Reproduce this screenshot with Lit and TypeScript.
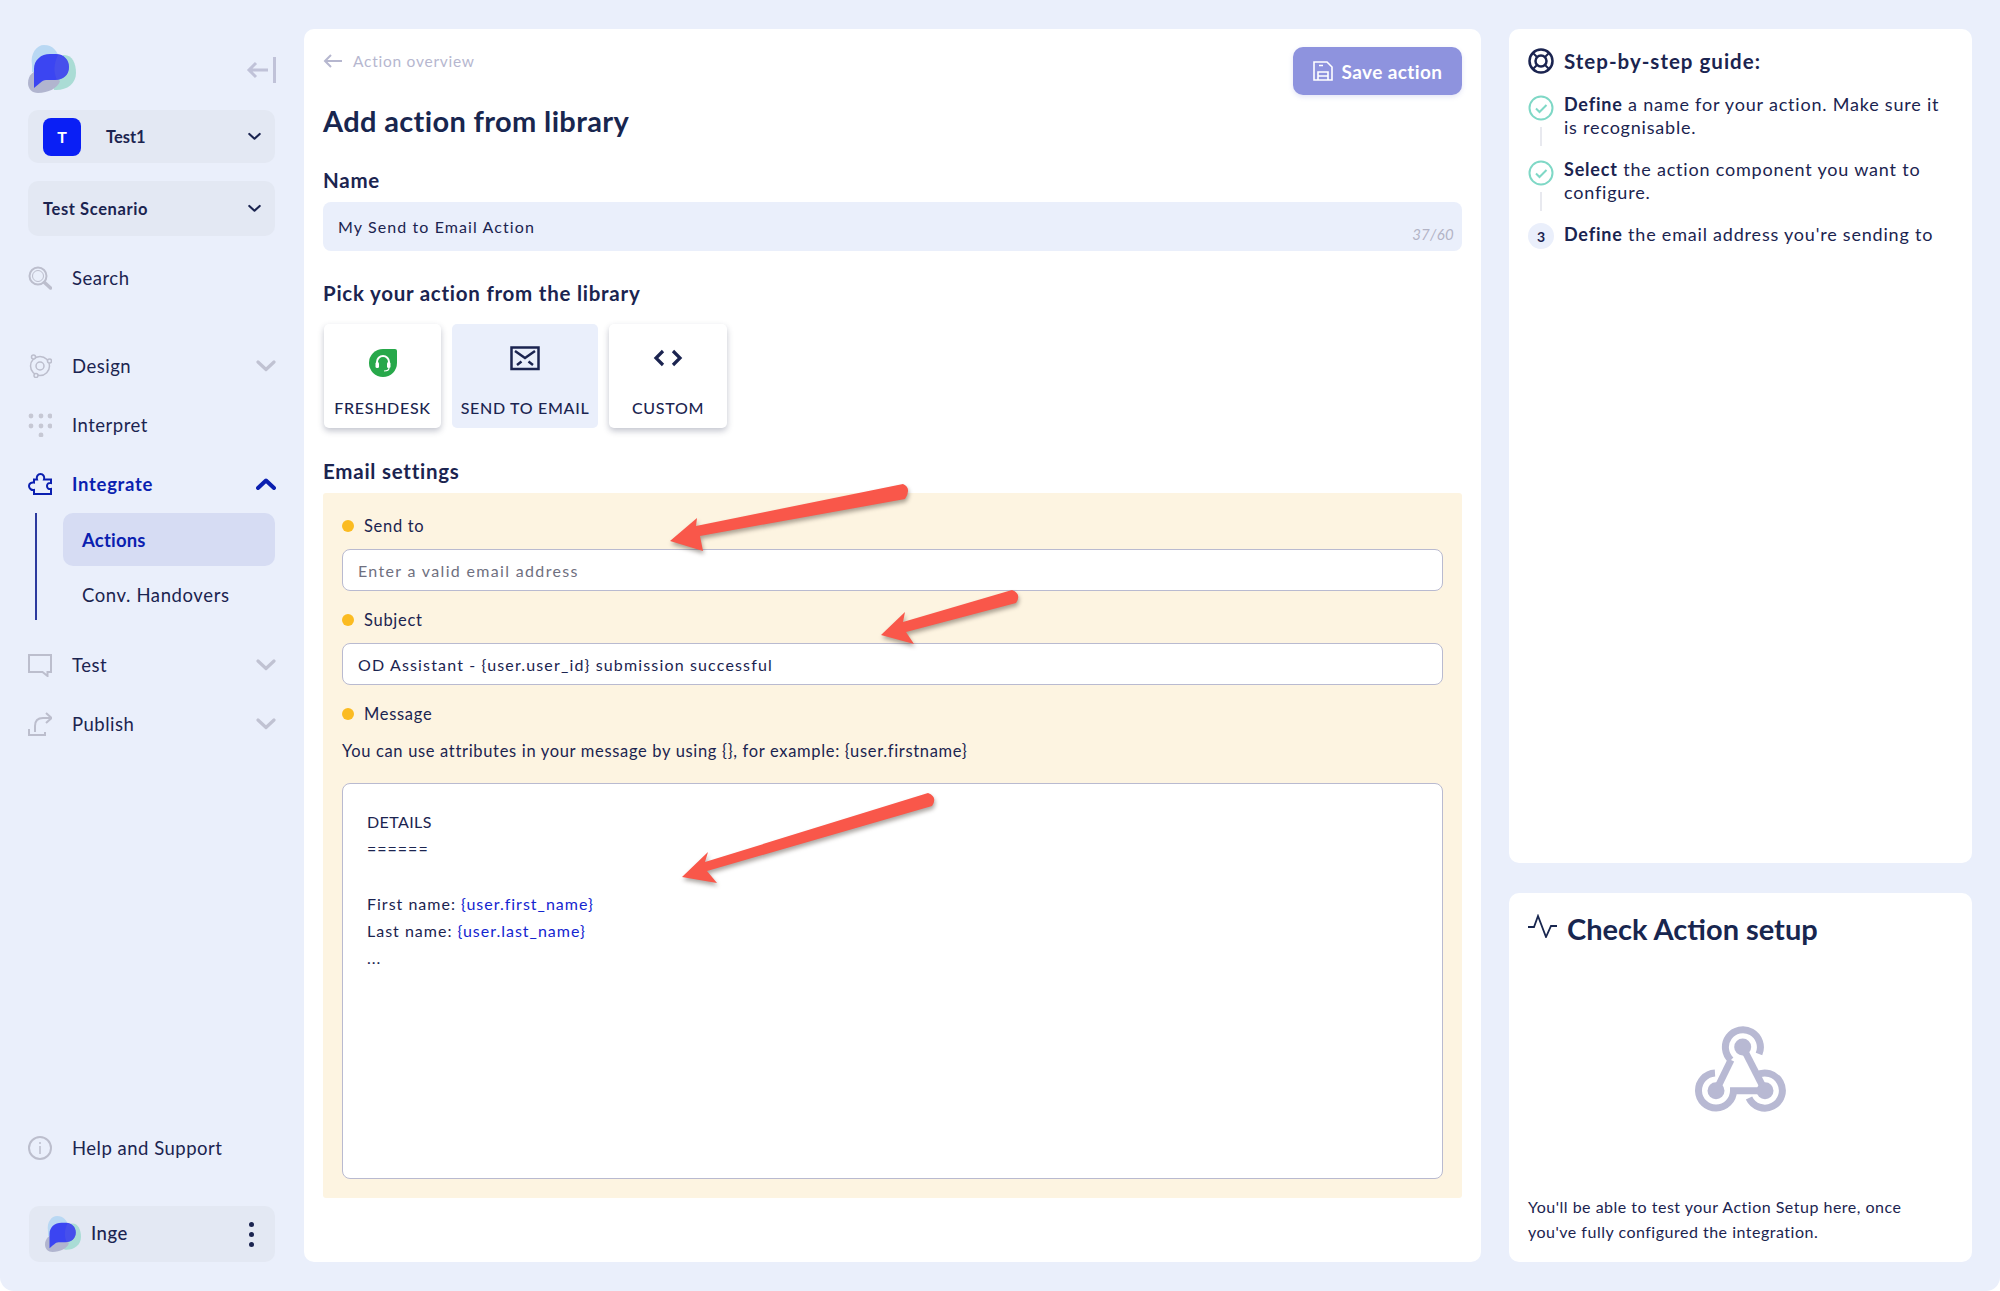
import { LitElement, css, html, svg } from 'lit';
import { customElement } from 'lit/decorators.js';

const logo = (size: number) => html`
  <svg width=${size} height=${size} viewBox="0 0 48 48">
    <path fill="#b9d8f3" d="M4 20C2 8 9 0 16 0c9 0 13 6 16 14L20 30 4 27z" />
    <path fill="#aadcd5" d="M35 10c9-1 13 8 13 18 0 11-10 18-22 17l-4-15z" />
    <path fill="#b1b5cf" d="M0 38c0-8 6-13 14-14l18 12c-2 7-12 12-22 12-6 0-10-4-10-10z" />
    <path fill="#3b45f2" d="M6 43V24C6 15 13 9 22 9h6c8 0 13 6 13 13 0 8-6 13-14 13h-9c-4 0-8 5-12 8z" />
    <path fill="#5057e8" opacity=".55" d="M30 10c7 1 11 6 11 12 0 7-5 12-12 13-4-8-3-17 1-25z" />
  </svg>
`;

const chevron = (kind: string) => html`
  <svg class="chev ${kind}" viewBox="0 0 20 12">
    <path d=${kind === 'up' ? 'M2 10l8-7.5 8 7.5' : 'M2 2l8 7.5 8-7.5'} />
  </svg>
`;

const navIcons: Record<string, unknown> = {
  search: svg`<circle cx="10" cy="10" r="8.500" /><circle cx="10" cy="10" r="5.500" stroke-width="1" /><path stroke-width="3.500" stroke-linecap="round" d="M16.500 16.500l6 5.500" />`,
  design: svg`<circle cx="12" cy="12" r="9.500" stroke-width="1.500" /><circle cx="12" cy="12" r="4" stroke-width="1.500" /><circle cx="5.500" cy="3" r="2" fill="#eaeffb" stroke-width="1.500" /><circle cx="21.500" cy="7" r="2" fill="#eaeffb" stroke-width="1.500" /><circle cx="8" cy="21.500" r="2" fill="#eaeffb" stroke-width="1.500" />`,
  test: svg`<path d="M1 2h22v17h-3.500v4l-5-4H1z" />`,
  publish: svg`<path d="M1 17v6h16v-3M7 20v-6c0-5 3-8 8-8h8M18 1l5.500 5-5.500 5" />`,
};

const grid = [
  [31, 414], [41, 414], [50, 414],
  [31, 424], [41, 424], [50, 424],
  [41, 433],
];

const arrows = [
  'M670 541L697 518 696 526 903 484Q912 488 905 499L700 536 703 551Z',
  'M881 635L905 612 903 622 1012 590Q1022 594 1016 603L906 632 914 644Z',
  'M682 877L708 852 705 862 928 793Q938 797 932 806L707 871 717 883Z',
];

@customElement('app-root')
export class AppRoot extends LitElement {
  static styles = css`
    :host {
      display: block;
      position: relative;
      width: 2000px;
      height: 1291px;
      background: #fff;
      font-family: 'Lato', 'Noto Sans', sans-serif;
      color: #1b2450;
      overflow: hidden;
    }
    * { box-sizing: border-box; }

    .shell {
      height: 1291px;
      background: #eaeffb;
      border-radius: 0 0 14px 14px;
      padding: 29px 29px 29px 28px;
      display: grid;
      grid-template-columns: 247px 1177px 462px;
      column-gap: 29px;
    }

    /* sidebar */
    .side { display: flex; flex-direction: column; height: 1233px; }
    .brand { display: flex; justify-content: space-between; align-items: center; margin-top: 16px; height: 48px; }
    .collapse { width: 30px; height: 26px; fill: none; stroke: #c0c2d8; stroke-width: 3; margin: 1px -1px 0 0; }
    .select {
      display: flex; align-items: center; background: #e3e8f3; border-radius: 10px;
      font-size: 16.5px; font-weight: 700; padding: 0 14px 0 15px;
    }
    .select.team { height: 53px; margin-top: 17px; }
    .select.scenario { height: 55px; margin-top: 18px; letter-spacing: .6px; }
    .tile {
      width: 38px; height: 38px; border-radius: 8px; background: #0a1ff5; color: #fff;
      display: flex; align-items: center; justify-content: center; font-size: 16px; font-weight: 700;
      margin-right: 25px;
    }
    .select span.grow { flex: 1; }
    .select .chev { width: 13px; height: 9px; stroke: #1b2450; stroke-width: 3.2; }
    .chev { fill: none; stroke-linecap: round; stroke-linejoin: round; }
    .row { display: flex; align-items: center; height: 40px; font-size: 18.5px; letter-spacing: .5px; }
    .row .icon { width: 24px; height: 24px; margin-right: 20px; fill: none; stroke: #bcbecd; stroke-width: 2; flex: none; }
    .row .grow { flex: 1; }
    .row .chev { width: 20px; height: 12px; stroke: #c0c2d2; stroke-width: 3.2; margin-right: -1px; }
    .row.active { color: #0b1fb0; font-weight: 700; letter-spacing: .7px; }
    .row.active .icon { stroke: #0b1fb0; }
    .row.active .chev { stroke: #0b1fb0; stroke-width: 4; }
    .search { margin-top: 22px; }
    .design { margin-top: 48px; }
    .next { margin-top: 19px; }
    .dots { width: 24px; margin-right: 20px; height: 24px; flex: none; }
    .sub {
      margin: 9px 0 0 7px; border-left: 2px solid #2c3a9e; padding-left: 26px;
      height: 107px; margin-bottom: 25px;
    }
    .sub div { height: 53px; display: flex; align-items: center; padding-left: 19px; font-size: 18.5px; border-radius: 10px; letter-spacing: .6px; }
    .sub .on { background: #d6dcf3; color: #0b1fb0; font-weight: 700; letter-spacing: .2px; }
    .sub .off { margin-top: 3px; height: 51px; }
    .help { margin-top: auto; }
    .user {
      margin: 38px 0 0 1px; height: 56px; background: #e3e8f3; border-radius: 10px;
      display: flex; align-items: center; padding-left: 16px; font-size: 18.5px; font-weight: 500; letter-spacing: .5px;
    }
    .user svg { margin-right: 10px; }
    .user .name { flex: 1; margin-top: -3px; }
    .kebab { display: flex; flex-direction: column; gap: 5px; margin-right: 21px; }
    .kebab i { width: 5px; height: 5px; border-radius: 50%; background: #1b2450; }

    /* main card */
    .card { background: #fff; border-radius: 10px; }
    .main { padding: 18px 19px 0 19px; height: 1233px; }
    .head { display: flex; justify-content: space-between; }
    .back { display: flex; align-items: center; height: 28px; font-size: 15.5px; color: #b6b7cf; letter-spacing: .75px; }
    .back svg { width: 20px; height: 14px; margin-right: 10px; fill: none; stroke: #b6b7cf; stroke-width: 2; }
    h1 { margin: 26px 0 0; font-size: 29px; line-height: 40px; font-weight: 700; color: #18264f; letter-spacing: .35px; }
    .save {
      width: 169px; height: 48px; background: #8e93de; border-radius: 10px; color: #fff;
      display: flex; align-items: center; justify-content: center; gap: 9px;
      font-size: 19px; font-weight: 700; letter-spacing: .4px; box-shadow: 0 2px 5px rgba(120, 125, 210, .2);
    }
    .save svg { width: 20px; height: 20px; fill: none; stroke: #fff; stroke-width: 1.6; }
    h2 { margin: 0; font-size: 20.5px; line-height: 26px; font-weight: 700; color: #1b2450; letter-spacing: .75px; }
    .l-name { margin-top: 26px; }
    .name-input {
      height: 49px; margin-top: 9px; background: #eaeffb; border-radius: 8px;
      display: flex; justify-content: space-between; padding: 0 8px 0 15px; align-items: center;
      font-size: 16px; letter-spacing: 1.1px;
    }
    .count { font-size: 15px; font-style: italic; color: #b3b4c6; letter-spacing: .3px; margin-top: 15px; }
    .l-pick { margin-top: 29px; }
    .tiles { display: flex; gap: 11px; margin: 18px 0 0 1px; height: 104px; }
    .lib {
      display: flex; flex-direction: column; align-items: center; height: 104px; border-radius: 5px;
      background: #fff; box-shadow: 0 3px 6px rgba(40, 45, 80, .28); font-size: 16px; font-weight: 500;
      letter-spacing: .7px; padding-top: 24px;
    }
    .lib svg { width: 30px; height: 30px; flex: none; }
    .lib span { margin-top: auto; margin-bottom: 10px; line-height: 20px; }
    .lib.sel { background: #eaeffb; box-shadow: none; }
    .l-email { margin-top: 30px; }
    .panel { margin-top: 9px; height: 705px; background: #fdf4e1; padding: 21px 19px 0; border-radius: 3px; }
    .lab { display: flex; align-items: center; height: 24px; font-size: 16.5px; letter-spacing: .7px; }
    .lab i { width: 12px; height: 12px; border-radius: 50%; background: #fbbb21; margin-right: 10px; }
    .field {
      height: 42px; margin: 11px 0 17px; background: #fff; border: 1.5px solid #b9bad0; border-radius: 8px;
      display: flex; align-items: center; padding-left: 15px; font-size: 16px; letter-spacing: 1.15px;
    }
    .field.ph { color: #6f7080; letter-spacing: 1.33px; }
    .hint { margin-top: 13px; font-size: 16.5px; line-height: 24px; letter-spacing: .67px; }
    .area {
      margin-top: 20px; height: 396px; background: #fff; border: 1.5px solid #b9bad0; border-radius: 8px;
      padding: 24px 24px; font-size: 16px; line-height: 27.3px; letter-spacing: 1px;
    }
    .area div { height: 27.3px; }
    .area .caps { letter-spacing: .4px; }
    .attr { color: #1425d0; }

    /* right column */
    .right { display: grid; grid-template-rows: 834px 369px; row-gap: 30px; height: 1233px; margin-left: -1px; }
    .guide { padding: 17px 19px; }
    .g-head { display: flex; align-items: center; gap: 10px; height: 30px; font-size: 20.5px; font-weight: 700; letter-spacing: 1px; }
    .g-head svg { width: 26px; height: 26px; fill: none; stroke: #1b2450; flex: none; }
    .steps { margin-top: 17px; font-size: 18px; line-height: 23px; letter-spacing: .8px; }
    .step { display: flex; gap: 10px; margin-bottom: 19px; }
    .step:last-child { margin-bottom: 0; }
    .marker { width: 26px; flex: none; display: flex; flex-direction: column; align-items: center; position: relative; padding-top: 2px; }
    .marker svg { width: 26px; height: 26px; fill: none; stroke: #7fd8c6; stroke-width: 2; }
    .marker i { position: absolute; top: 34px; width: 2px; height: 19px; background: #e8e9ef; }
    .num {
      width: 26px; height: 26px; border-radius: 50%; background: #eaeffb; font-size: 14px; font-weight: 700;
      display: flex; align-items: center; justify-content: center; letter-spacing: 0; margin-top: -2px;
    }
    .check { padding: 17px 19px 0; display: flex; flex-direction: column; }
    .c-head { display: flex; align-items: center; gap: 10px; height: 36px; font-size: 29px; font-weight: 700; color: #18264f; }
    .c-head svg { width: 29px; height: 24px; fill: none; stroke: #18264f; stroke-width: 1.8; margin-top: -4px; }
    .hook { align-self: center; width: 92px; height: 86px; margin-top: 80px; fill: none; stroke: #b8b9d3; stroke-width: 7; }
    .hook circle { fill: #b8b9d3; stroke: none; }
    .c-text { margin-top: 82px; font-size: 16px; line-height: 25px; letter-spacing: .5px; }

    /* callout arrows drawn over the form */
    .callouts { position: absolute; left: 0; top: 0; width: 2000px; height: 1291px; pointer-events: none; }
    .callouts path { fill: #f9574a; filter: drop-shadow(1px 3px 2px rgba(70, 60, 50, .45)); }
  `;

  private renderSidebar() {
    return html`
      <aside class="side">
        <div class="brand">
          ${logo(48)}
          <svg class="collapse" viewBox="0 0 30 26"><path d="M22 13H3M10 6l-7 7 7 7M28.500 0v26" /></svg>
        </div>
        <div class="select team"><div class="tile">T</div><span class="grow">Test1</span>${chevron('down')}</div>
        <div class="select scenario"><span class="grow">Test Scenario</span>${chevron('down')}</div>
        <div class="row search"><svg class="icon" viewBox="0 0 24 24">${navIcons.search}</svg>Search</div>
        <div class="row design"><svg class="icon" viewBox="0 0 24 24">${navIcons.design}</svg><span class="grow">Design</span>${chevron('down')}</div>
        <div class="row next">
          <svg class="dots" viewBox="28 414 24 24" fill="#c6c8d4">
            ${grid.map(([x, y]) => svg`<circle cx=${x} cy=${y + 3} r="2.400" />`)}
          </svg>
          <span class="grow">Interpret</span>
        </div>
        <div class="row next active">
          <svg class="icon" viewBox="0 0 24 22"><path d="M6 21v-4c-2.500.5-5-1.500-5-4s2.500-4 5-3.500v-3h3c-1-3 1-5.500 3.500-5.500S17 3.500 16 6.500h7V10c-2.500-.5-4 1-4 3s1.500 3.500 4 3v5z" /></svg>
          <span class="grow">Integrate</span>${chevron('up')}
        </div>
        <div class="sub">
          <div class="on">Actions</div>
          <div class="off">Conv. Handovers</div>
        </div>
        <div class="row"><svg class="icon" viewBox="0 0 24 24">${navIcons.test}</svg><span class="grow">Test</span>${chevron('down')}</div>
        <div class="row next"><svg class="icon" viewBox="0 0 24 24">${navIcons.publish}</svg><span class="grow">Publish</span>${chevron('down')}</div>
        <div class="row help">
          <svg class="icon" viewBox="0 0 24 24"><circle cx="12" cy="12" r="11" /><path stroke-width="1.500" d="M12 10v8M12 6v2" /></svg>
          Help and Support
        </div>
        <div class="user">
          ${logo(36)}
          <span class="name">Inge</span>
          <div class="kebab"><i></i><i></i><i></i></div>
        </div>
      </aside>
    `;
  }

  private renderForm() {
    return html`
      <main class="card main">
        <div class="head">
          <div>
            <div class="back"><svg viewBox="0 0 20 14"><path d="M19 7H2M8 1L2 7l6 6" /></svg>Action overview</div>
            <h1>Add action from library</h1>
          </div>
          <div class="save">
            <svg viewBox="0 0 20 20"><path d="M1 1h13l5 5v13H1zM6 4.500h4M5 19v-8h10v8M5 15h10" /></svg>
            Save action
          </div>
        </div>
        <h2 class="l-name">Name</h2>
        <div class="name-input"><span>My Send to Email Action</span><span class="count">37/60</span></div>
        <h2 class="l-pick">Pick your action from the library</h2>
        <div class="tiles">
          <div class="lib" style="width:117px">
            <svg viewBox="0 0 30 30">
              <path fill="#27a84a" d="M15 1h12a2 2 0 0 1 2 2v12a14 14 0 1 1-14-14z" />
              <path fill="none" stroke="#fff" stroke-width="2" d="M9 17v-3a6 6 0 0 1 12 0v3" />
              <rect x="7.500" y="14" width="3.500" height="6" rx="1.500" fill="#fff" />
              <rect x="19" y="14" width="3.500" height="6" rx="1.500" fill="#fff" />
              <path fill="none" stroke="#fff" stroke-width="1.200" d="M21 20c0 2-2 3-5 3" />
            </svg>
            <span>FRESHDESK</span>
          </div>
          <div class="lib sel" style="width:146px;padding-top:19px">
            <svg viewBox="0 0 30 30" fill="none" stroke="#1b2450" stroke-width="2.500">
              <rect x="1.500" y="4.500" width="27" height="21.500" />
              <path d="M5 8l10 7 10-7M7 22l4.500-3.500M23 22l-4.500-3.500" />
            </svg>
            <span>SEND TO EMAIL</span>
          </div>
          <div class="lib" style="width:118px;padding-top:19px">
            <svg viewBox="0 0 30 30" fill="none" stroke="#1b2450" stroke-width="3.200">
              <path d="M10 8l-7 7 7 7M20 8l7 7-7 7" />
            </svg>
            <span>CUSTOM</span>
          </div>
        </div>
        <h2 class="l-email">Email settings</h2>
        <section class="panel">
          <div class="lab"><i></i>Send to</div>
          <div class="field ph">Enter a valid email address</div>
          <div class="lab"><i></i>Subject</div>
          <div class="field">OD Assistant - {user.user_id} submission successful</div>
          <div class="lab"><i></i>Message</div>
          <div class="hint">You can use attributes in your message by using {}, for example: {user.firstname}</div>
          <div class="area">
            <div class="caps">DETAILS</div>
            <div>======</div>
            <div></div>
            <div>First name: <span class="attr">{user.first_name}</span></div>
            <div>Last name: <span class="attr">{user.last_name}</span></div>
            <div>...</div>
          </div>
        </section>
      </main>
    `;
  }

  private renderRight() {
    const tick = html`<svg viewBox="0 0 26 26"><circle cx="13" cy="13" r="11.500" /><path d="M8 13.500l3.500 3.500 7-7" /></svg>`;
    return html`
      <div class="right">
        <section class="card guide">
          <div class="g-head">
            <svg viewBox="0 0 26 26" stroke-width="2.500"><circle cx="13" cy="13" r="11.500" /><circle cx="13" cy="13" r="5.500" /><path stroke-width="2" d="M5 5l4 4M21 5l-4 4M5 21l4-4M21 21l-4-4" /></svg>
            Step-by-step guide:
          </div>
          <div class="steps">
            <div class="step">
              <div class="marker">${tick}<i></i></div>
              <div><b>Define</b> a name for your action. Make sure it<br />is recognisable.</div>
            </div>
            <div class="step">
              <div class="marker">${tick}<i></i></div>
              <div><b>Select</b> the action component you want to<br />configure.</div>
            </div>
            <div class="step">
              <div class="marker"><div class="num">3</div></div>
              <div><b>Define</b> the email address you're sending to</div>
            </div>
          </div>
        </section>
        <section class="card check">
          <div class="c-head">
            <svg viewBox="0 0 29 24"><path d="M0 13h6l4-11 8 21 5-11h6" /></svg>
            Check Action setup
          </div>
          <svg class="hook" viewBox="0 0 92 86">
            <path d="M36 34A17.500 17.500 0 1 1 64 28" />
            <path d="M36 34L21 64.700" />
            <path d="M47.700 21L70 64.700" />
            <path d="M20 47A17.500 17.500 0 1 0 38.500 64.700H70" />
            <path d="M54 72A17.500 17.500 0 1 0 61 49.500" />
            <circle cx="47.700" cy="21" r="8.500" />
            <circle cx="21" cy="64.700" r="8.500" />
            <circle cx="70" cy="64.700" r="8.500" />
          </svg>
          <div class="c-text">You'll be able to test your Action Setup here, once<br />you've fully configured the integration.</div>
        </section>
      </div>
    `;
  }

  render() {
    return html`
      <div class="shell">
        ${this.renderSidebar()}
        ${this.renderForm()}
        ${this.renderRight()}
      </div>
      <svg class="callouts" viewBox="0 0 2000 1291">
        ${arrows.map((d) => svg`<path d=${d} />`)}
      </svg>
    `;
  }
}
